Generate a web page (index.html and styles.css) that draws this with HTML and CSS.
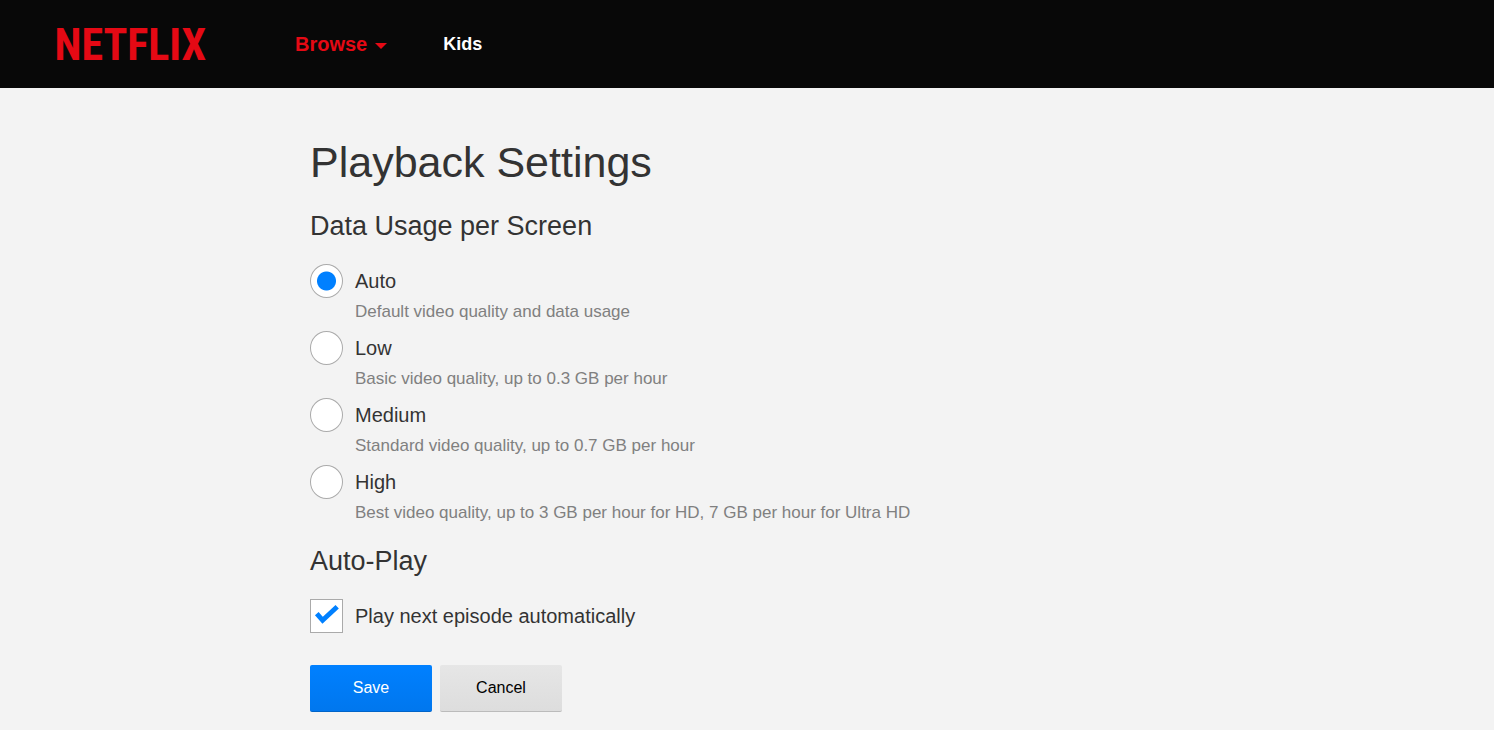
FILE: index.html
```html
<!DOCTYPE html>
<html lang="en">
<head>
<meta charset="utf-8">
<meta name="viewport" content="width=device-width, initial-scale=1">
<title>Playback Settings</title>
<link rel="stylesheet" href="styles.css">
</head>
<body>
<header class="header">
  <a class="logo" href="#" aria-label="Netflix">
    <svg class="logo-mark" viewBox="0 0 152 44" aria-hidden="true">
      <text class="logo-text" x="0" y="38">NETFLIX</text>
    </svg>
  </a>
  <nav class="nav">
    <a class="nav-link nav-link-active" href="#">Browse
      <svg class="caret" viewBox="0 0 12 6" aria-hidden="true"><path d="M0 0h12L6 6z"/></svg>
    </a>
    <a class="nav-link" href="#">Kids</a>
  </nav>
</header>
<main class="main">
  <form class="settings">
    <h1 class="title">Playback Settings</h1>
    <h2 class="heading" id="usage">Data Usage per Screen</h2>
    <div class="options" role="radiogroup" aria-labelledby="usage">
      <div class="option">
        <input class="control radio" type="radio" name="quality" id="auto" checked>
        <label class="label" for="auto">Auto</label>
        <p class="hint">Default video quality and data usage</p>
      </div>
      <div class="option">
        <input class="control radio" type="radio" name="quality" id="low">
        <label class="label" for="low">Low</label>
        <p class="hint">Basic video quality, up to 0.3 GB per hour</p>
      </div>
      <div class="option">
        <input class="control radio" type="radio" name="quality" id="medium">
        <label class="label" for="medium">Medium</label>
        <p class="hint">Standard video quality, up to 0.7 GB per hour</p>
      </div>
      <div class="option">
        <input class="control radio" type="radio" name="quality" id="high">
        <label class="label" for="high">High</label>
        <p class="hint">Best video quality, up to 3 GB per hour for HD, 7 GB per hour for Ultra HD</p>
      </div>
    </div>
    <h2 class="heading">Auto-Play</h2>
    <div class="option">
      <span class="checkbox-wrap">
        <input class="control" type="checkbox" id="autoplay" checked>
        <svg class="check" viewBox="0 0 34 34" aria-hidden="true"><path d="M7 15l6 7L28 8"/></svg>
      </span>
      <label class="label" for="autoplay">Play next episode automatically</label>
    </div>
    <div class="actions">
      <button class="button button-primary" type="button">Save</button>
      <button class="button" type="button">Cancel</button>
    </div>
  </form>
</main>
</body>
</html>
```
FILE: styles.css
```css
* { box-sizing: border-box; }

body {
  margin: 0;
  background: #f3f3f3;
  color: #333;
  font-family: "Liberation Sans", Arial, sans-serif;
}

.header {
  display: flex;
  align-items: center;
  gap: 88px;
  height: 88px;
  padding: 0 54px;
  background: #080808;
}

.logo { display: flex; }
.logo-mark { width: 153px; height: 44px; }
.logo-text {
  fill: #e50914;
  font: bold 44px "Roboto Condensed", "Liberation Sans Narrow", "Open Sans Condensed", "Liberation Sans", sans-serif;
}

.nav { display: flex; align-items: center; gap: 56px; }
.nav-link {
  display: flex;
  align-items: center;
  gap: 8px;
  color: #fff;
  font-size: 18px;
  font-weight: bold;
  text-decoration: none;
}
.nav-link-active { color: #e50914; font-size: 20px; }
.caret { width: 12px; height: 6px; margin-top: 4px; fill: currentColor; }

.main { padding: 44px 310px 16px; }

.title {
  margin: 0;
  font-size: 43px;
  font-weight: normal;
  line-height: 60px;
}
.heading {
  margin: 16px 0 20px;
  font-size: 27px;
  font-weight: normal;
  line-height: 36px;
}

.options { display: grid; gap: 5px; }
.option {
  display: grid;
  grid-template-columns: 33px 1fr;
  column-gap: 12px;
  align-items: center;
}
.control {
  appearance: none;
  display: block;
  width: 33px;
  height: 34px;
  margin: 0;
  border: 1px solid #aaa;
  background: #fff;
}
.radio { border-radius: 50%; }
.radio:checked { background: radial-gradient(circle, #0080ff 9px, #fff 10px); }
.checkbox-wrap { position: relative; }
.check {
  position: absolute;
  inset: 0;
  fill: none;
  stroke: #0080ff;
  stroke-width: 5;
  pointer-events: none;
}

.label { font-size: 20px; line-height: 34px; }
.hint {
  grid-column: 2;
  margin: 0;
  color: #808080;
  font-size: 17px;
  line-height: 28px;
}

.actions { display: flex; gap: 8px; margin-top: 32px; }
.button {
  width: 122px;
  height: 47px;
  border: 0;
  border-bottom: 1px solid #bbb;
  border-radius: 2px;
  background: linear-gradient(#e6e6e6, #ddd);
  color: #000;
  font: 16px "Liberation Sans", Arial, sans-serif;
}
.button-primary {
  border-bottom-color: #0064c8;
  background: linear-gradient(#0080ff, #0077ee);
  color: #fff;
}
```
